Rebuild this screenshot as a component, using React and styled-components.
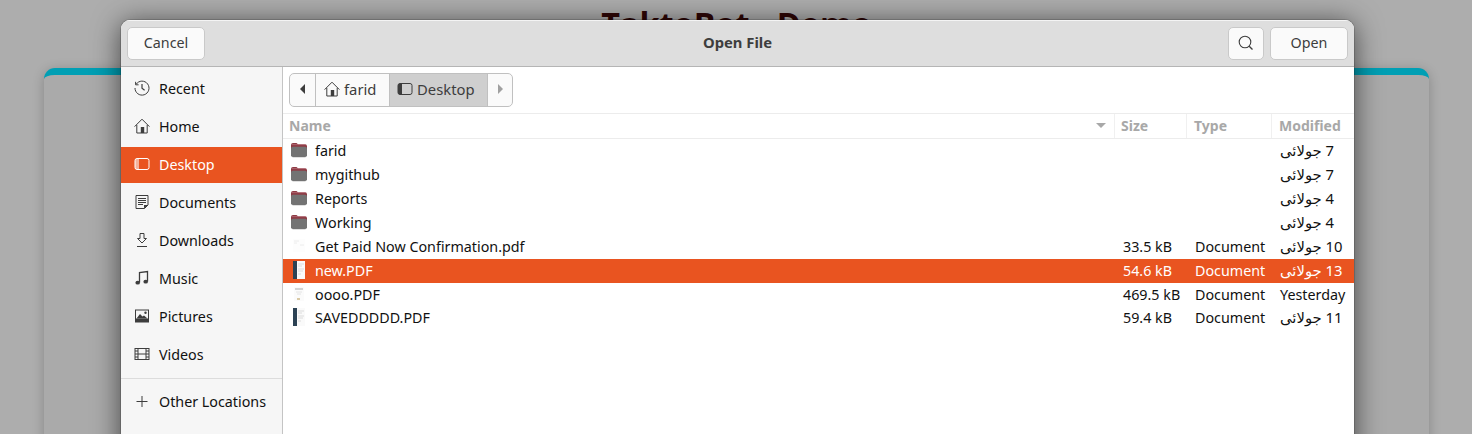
import React from "react";
import styled, { createGlobalStyle } from "styled-components";

const GlobalStyle = createGlobalStyle`
  html, body {
    margin: 0;
    padding: 0;
    height: 434px;
    overflow: hidden;
    background: #adadad;
  }
`;

const Page = styled.div`
  position: relative;
  height: 434px;
  overflow: hidden;
  padding: 0 43px 0 44px;
  background: #adadad;
`;
const PageTitle = styled.h1`
  margin: 0 0 48px;
  height: 20px;
  overflow: hidden;
  padding-top: 2px;
  box-sizing: border-box;
  text-align: center;
  font: bold 32.4px/42px "Open Sans", sans-serif;
  color: #2e0505;
`;
const Card = styled.div`
  height: 420px;
  box-sizing: border-box;
  background: #aaaaaa;
  border-top: 7px solid #009fb4;
  border-radius: 11px;
  box-shadow: 0 2px 12px rgba(0, 0, 0, 0.22);
`;

const Dialog = styled.div`
  position: absolute;
  left: 121px;
  top: 20px;
  width: 1233px;
  height: 460px;
  display: flex;
  flex-direction: column;
  background: #fff;
  border-radius: 9px 9px 0 0;
  box-shadow: 0 3px 28px rgba(0, 0, 0, 0.62), 0 0 0 1px rgba(0, 0, 0, 0.14);
  font: 14.3px "Noto Sans", sans-serif;
  color: #111;
  overflow: hidden;
`;
const TitleBar = styled.header`
  height: 47px;
  flex: none;
  box-sizing: border-box;
  display: grid;
  grid-template-columns: 1fr auto 1fr;
  align-items: start;
  padding: 6px 6px 0;
  background: #dedede;
  border-top: 1px solid #f4f4f4;
  border-bottom: 1px solid #b5b5b5;
`;
const ButtonGroup = styled.div`
  display: flex;
  gap: 6px;
  justify-content: ${(p) => (p.$end ? "flex-end" : "flex-start")};
`;
const HeaderButton = styled.button`
  height: 33px;
  width: ${(p) => p.$width}px;
  padding: 0 0 2px;
  display: flex;
  align-items: center;
  justify-content: center;
  box-sizing: border-box;
  background: #fafafa;
  border: 1px solid #c9c9c9;
  border-radius: 5px;
  font: 14.3px "Noto Sans", sans-serif;
  color: #3d3d3d;
`;
const TitleText = styled.div`
  font-weight: 700;
  font-size: 14.8px;
  line-height: 31px;
  color: #3d3d3d;
`;
const Body = styled.div`
  flex: 1;
  display: flex;
  min-height: 0;
`;
const Sidebar = styled.nav`
  width: 162px;
  flex: none;
  box-sizing: border-box;
  padding-top: 4px;
  background: #f6f6f6;
  border-right: 1px solid #c4c4c4;
`;
const Place = styled.div`
  height: 36px;
  box-sizing: border-box;
  margin-bottom: 2px;
  display: flex;
  align-items: center;
  gap: 9px;
  padding: 0 0 2px 13px;
  background: ${(p) => (p.$selected ? "#e95420" : "transparent")};
  color: ${(p) => (p.$selected ? "#fff" : "#111")};
  svg {
    color: ${(p) => (p.$selected ? "#ffffff" : "#3d3d3d")};
  }
`;
const SideRule = styled.div`
  height: 1px;
  margin: 5px 0;
  background: #dcdcdc;
`;
const Main = styled.main`
  flex: 1;
  min-width: 0;
  display: flex;
  flex-direction: column;
`;
const PathRow = styled.div`
  height: 46px;
  flex: none;
  box-sizing: border-box;
  padding: 6px 6px 0;
`;
const PathBar = styled.div`
  display: inline-flex;
  height: 34px;
  box-sizing: border-box;
  background: #fafafa;
  border: 1px solid #c0c0c0;
  border-radius: 5px;
  overflow: hidden;
`;
const PathItem = styled.div`
  display: flex;
  align-items: center;
  justify-content: ${(p) => (p.$pad ? "flex-start" : "center")};
  gap: 4px;
  width: ${(p) => p.$width}px;
  padding: 0 0 2px ${(p) => p.$pad || 0}px;
  box-sizing: border-box;
  font-size: 14.8px;
  color: #3d3d3d;
  background: ${(p) => (p.$active ? "#cfcfcf" : "transparent")};
  border-right: ${(p) => (p.$last ? "none" : "1px solid #c0c0c0")};
`;
const HeaderRow = styled.div`
  height: 26px;
  flex: none;
  box-sizing: border-box;
  display: grid;
  grid-template-columns: 832px 72px 85px 1fr;
  border-top: 1px solid #ececec;
  border-bottom: 1px solid #ececec;
`;
const HeadCell = styled.div`
  display: flex;
  align-items: center;
  justify-content: space-between;
  padding: 0 ${(p) => p.$right || 0}px 2px ${(p) => p.$left || 7}px;
  font-weight: 700;
  font-size: 14px;
  color: #a8a8a8;
  border-right: ${(p) => (p.$last ? "none" : "1px solid #f0f0f0")};
`;
const SortArrow = styled.span`
  width: 0;
  height: 0;
  border-left: 5px solid transparent;
  border-right: 5px solid transparent;
  border-top: 5px solid #a8a8a8;
`;
const FileRow = styled.div`
  height: 24px;
  box-sizing: border-box;
  padding-bottom: ${(p) => (p.$raised ? 4 : 2)}px;
  display: grid;
  grid-template-columns: 832px 72px 85px 1fr;
  align-items: center;
  background: ${(p) => (p.$selected ? "#e95420" : "transparent")};
  color: ${(p) => (p.$selected ? "#fff" : "#111")};
`;
const NameCell = styled.div`
  display: flex;
  align-items: center;
  gap: 8px;
  padding-left: 8px;
`;
const DataCell = styled.div`
  padding-left: 8px;
  white-space: nowrap;
`;
const DateText = styled.span`
  display: inline-block;
  direction: ${(p) => (p.$rtl ? "rtl" : "ltr")};
  unicode-bidi: isolate;
  font-family: "Noto Sans", "DejaVu Sans", sans-serif;
  font-size: ${(p) => (p.$rtl ? 14.8 : 14.3)}px;
`;

const Svg = ({ children, size = 16 }) => (
  <svg width={size} height={size} viewBox="0 0 16 16" fill="none" stroke="currentColor" strokeWidth="1" style={{ flex: "none" }}>
    {children}
  </svg>
);

const RecentIcon = () => (
  <Svg>
    <path d="M2.2 4.2A7 7 0 1 1 1 8" />
    <path d="M1.6 1.8v3h3" />
    <path d="M8 4v4.3l2.6 2" strokeWidth="1.2" />
  </Svg>
);
const HomeIcon = () => (
  <Svg>
    <path d="M.6 8.6 8 1.2l7.4 7.4" />
    <path d="M2.8 7v8h10.4V7" />
    <path d="M6.8 9h3.4v6H6.8z" fill="currentColor" stroke="none" />
  </Svg>
);
const DesktopIcon = ({ selected }) => (
  <Svg>
    <rect x="1" y="2.5" width="14" height="11" rx="2" />
    <path d="M1 4.5a2 2 0 0 1 2-2h2v11H3a2 2 0 0 1-2-2z" fill="currentColor" stroke="none" opacity={selected ? 0.55 : 1} />
  </Svg>
);
const DocumentsIcon = () => (
  <Svg>
    <path d="M2 1.5h12v9.5L10.5 14.5H2z" />
    <path d="M4 4.5h8M4 6.5h8M4 8.5h8M4 10.5h5" />
    <path d="M10 14.5V11h4z" fill="currentColor" stroke="none" />
  </Svg>
);
const DownloadsIcon = () => (
  <Svg>
    <path d="M6 1.5h4v5h2.5L8 11 3.5 6.5H6z" />
    <path d="M3 14.5h10" />
  </Svg>
);
const MusicIcon = () => (
  <Svg>
    <path d="M5.5 12.5V2.5l8-1v10" strokeWidth="1.3" />
    <ellipse cx="3.7" cy="12.7" rx="2.3" ry="1.9" fill="currentColor" stroke="none" />
    <ellipse cx="11.7" cy="11.7" rx="2.3" ry="1.9" fill="currentColor" stroke="none" />
  </Svg>
);
const PicturesIcon = () => (
  <Svg>
    <rect x="1" y="1.5" width="14" height="13" fill="currentColor" stroke="none" />
    <rect x="2" y="2.5" width="12" height="8" fill="#f6f6f6" stroke="none" />
    <path d="M2.5 10.5 6 6l2.5 2.5 1.5-1 3.5 3z" fill="currentColor" stroke="none" />
    <circle cx="11.5" cy="4.8" r="1.2" fill="currentColor" stroke="none" />
  </Svg>
);
const VideosIcon = () => (
  <Svg>
    <rect x="1" y="2.5" width="14" height="11" />
    <path d="M4 2.5v11M12 2.5v11M4 8h8M1 5h3M1 8h3M1 11h3M12 5h3M12 8h3M12 11h3" />
  </Svg>
);
const PlusIcon = () => (
  <Svg>
    <path d="M8 3v11M2.5 8.5h11" />
  </Svg>
);
const SearchIcon = () => (
  <Svg>
    <circle cx="7" cy="7" r="5.8" strokeWidth="1.1" />
    <path d="m11.2 11.2 3.3 3.3" strokeWidth="1.3" />
  </Svg>
);
const Chevron = ({ right, color }) => (
  <svg width="8" height="10" viewBox="0 0 8 10">
    <path d={right ? "M2 0l5 5-5 5z" : "M6 0 1 5l5 5z"} fill={color} />
  </svg>
);
const FolderIcon = () => (
  <svg width="16" height="16" viewBox="0 0 16 16" style={{ flex: "none" }}>
    <path d="M0 3a2 2 0 0 1 2-2h3.5L7 2.2h7A2 2 0 0 1 16 4.2V8H0z" fill="#8e3b45" />
    <path d="M1 2.6h14" stroke="#c08088" strokeWidth="0.6" />
    <rect x="0" y="4.8" width="16" height="10.2" rx="1.8" fill="#737373" />
    <path d="M1.5 15.5h13" stroke="#d8d8d8" strokeWidth="0.8" />
  </svg>
);
const PdfThumb = ({ kind }) => {
  if (kind === "blank") {
    return (
      <svg width="16" height="16" viewBox="0 0 16 16" style={{ flex: "none" }}>
        <rect x="2" y="1" width="12" height="13" fill="#fdfdfd" />
        <path d="M3 3h5M3 5h3M9 7h4" stroke="#ececec" />
      </svg>
    );
  }
  if (kind === "flyer") {
    return (
      <svg width="16" height="16" viewBox="0 0 16 16" style={{ flex: "none" }}>
        <rect x="3" y="1" width="10" height="14" fill="#fbfbfb" />
        <path d="M4 3h8" stroke="#d4d4d4" strokeWidth="2" />
        <path d="M5 6h6M6 8h4" stroke="#e4e4e4" />
        <path d="M6 13h3" stroke="#d9c9a5" strokeWidth="2" />
      </svg>
    );
  }
  return (
    <svg width="16" height="18" viewBox="0 0 16 18" style={{ flex: "none" }}>
      <rect x="2" y="0" width="12" height="18" fill="#fafafa" />
      <rect x="2" y="0" width="4" height="18" fill="#2c4254" />
      <path d="M7 3h6M7 5h4M7 8h6M7 10h5M7 13h3" stroke="#dcdcdc" />
    </svg>
  );
};

const places = [
  { name: "Recent", Icon: RecentIcon },
  { name: "Home", Icon: HomeIcon },
  { name: "Desktop", Icon: DesktopIcon, selected: true },
  { name: "Documents", Icon: DocumentsIcon },
  { name: "Downloads", Icon: DownloadsIcon },
  { name: "Music", Icon: MusicIcon },
  { name: "Pictures", Icon: PicturesIcon },
  { name: "Videos", Icon: VideosIcon },
];

const files = [
  { name: "farid", date: "7 جولائی", folder: true },
  { name: "mygithub", date: "7 جولائی", folder: true },
  { name: "Reports", date: "4 جولائی", folder: true },
  { name: "Working", date: "4 جولائی", folder: true },
  { name: "Get Paid Now Confirmation.pdf", size: "33.5 kB", type: "Document", date: "10 جولائی", thumb: "blank" },
  { name: "new.PDF", size: "54.6 kB", type: "Document", date: "13 جولائی", thumb: "dark", selected: true },
  { name: "oooo.PDF", size: "469.5 kB", type: "Document", date: "Yesterday", thumb: "flyer", latin: true },
  { name: "SAVEDDDDD.PDF", size: "59.4 kB", type: "Document", date: "11 جولائی", thumb: "dark", raised: true },
];

export default function App() {
  return (
    <Page>
      <GlobalStyle />
      <PageTitle>TaktoBot - Demo</PageTitle>
      <Card />
      <Dialog>
        <TitleBar>
          <ButtonGroup>
            <HeaderButton $width={78}>Cancel</HeaderButton>
          </ButtonGroup>
          <TitleText>Open File</TitleText>
          <ButtonGroup $end>
            <HeaderButton $width={36}>
              <SearchIcon />
            </HeaderButton>
            <HeaderButton $width={78}>Open</HeaderButton>
          </ButtonGroup>
        </TitleBar>
        <Body>
          <Sidebar>
            {places.map(({ name, Icon, selected }) => (
              <Place key={name} $selected={selected}>
                <Icon selected={selected} />
                {name}
              </Place>
            ))}
            <SideRule />
            <Place>
              <PlusIcon />
              Other Locations
            </Place>
          </Sidebar>
          <Main>
            <PathRow>
              <PathBar>
                <PathItem $width={26}>
                  <Chevron color="#3d3d3d" />
                </PathItem>
                <PathItem $width={74} $pad={8}>
                  <HomeIcon />
                  farid
                </PathItem>
                <PathItem $width={98} $pad={7} $active>
                  <DesktopIcon />
                  Desktop
                </PathItem>
                <PathItem $width={24} $last>
                  <Chevron right color="#a0a0a0" />
                </PathItem>
              </PathBar>
            </PathRow>
            <HeaderRow>
              <HeadCell $left={6} $right={8}>
                Name
                <SortArrow />
              </HeadCell>
              <HeadCell $left={6}>Size</HeadCell>
              <HeadCell>Type</HeadCell>
              <HeadCell $last>Modified</HeadCell>
            </HeaderRow>
            <div>
              {files.map((f) => (
                <FileRow key={f.name} $selected={f.selected} $raised={f.raised}>
                  <NameCell>
                    {f.folder ? <FolderIcon /> : <PdfThumb kind={f.thumb} />}
                    {f.name}
                  </NameCell>
                  <DataCell>{f.size}</DataCell>
                  <DataCell>{f.type}</DataCell>
                  <DataCell>
                    <DateText $rtl={!f.latin}>{f.date}</DateText>
                  </DataCell>
                </FileRow>
              ))}
            </div>
          </Main>
        </Body>
      </Dialog>
    </Page>
  );
}
